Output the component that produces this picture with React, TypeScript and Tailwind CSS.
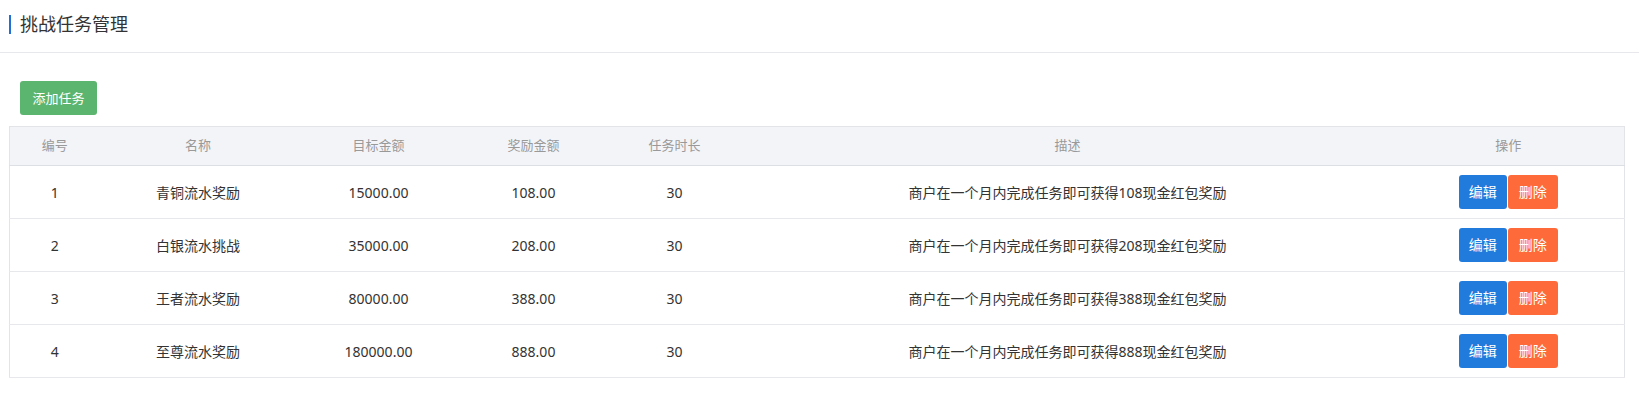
import React from "react"

const tasks = [
    { id: 1, name: "青铜流水奖励", target: "15000.00", reward: "108.00", days: 30, desc: "商户在一个月内完成任务即可获得108现金红包奖励" },
    { id: 2, name: "白银流水挑战", target: "35000.00", reward: "208.00", days: 30, desc: "商户在一个月内完成任务即可获得208现金红包奖励" },
    { id: 3, name: "王者流水奖励", target: "80000.00", reward: "388.00", days: 30, desc: "商户在一个月内完成任务即可获得388现金红包奖励" },
    { id: 4, name: "至尊流水奖励", target: "180000.00", reward: "888.00", days: 30, desc: "商户在一个月内完成任务即可获得888现金红包奖励" },
]

const columns = [
    { title: "编号", width: "w-[90px]" },
    { title: "名称", width: "w-[197px]" },
    { title: "目标金额", width: "w-[164px]" },
    { title: "奖励金额", width: "w-[146px]" },
    { title: "任务时长", width: "w-[136px]" },
    { title: "描述", width: "w-[650px]" },
    { title: "操作", width: "w-[232px]" },
]

export default function App() {
    return (
        <div
            className="w-[1639px] h-[400px] bg-white text-[#333] overflow-hidden"
            style={{ fontFamily: '"Noto Sans", "Noto Sans CJK SC", sans-serif' }}
        >
            {/* 页面标题 */}
            <div className="h-[53px] border-b border-[#e6e8ec] flex items-center pl-[9px] pb-[4px]">
                <span className="w-[2px] h-[19px] bg-[#1f6fd6]" />
                <h1 className="ml-[9px] text-[18px] leading-none text-[#333]">挑战任务管理</h1>
            </div>

            <div className="pl-[9px] pr-[15px]">
                <div className="pt-[28px] pl-[11px]">
                    <button className="h-[34px] w-[77px] rounded-[3px] bg-[#5cb56f] text-white text-[13px] leading-none">
                        添加任务
                    </button>
                </div>

                <table className="mt-[11px] w-[1615px] table-fixed border-collapse border border-[#e2e4e8] text-[14px]">
                    <thead className="bg-[#f3f4f8]">
                        <tr className="h-[39px] border-b border-[#dcdfe4]">
                            {columns.map((col) => (
                                <th key={col.title} className={`${col.width} font-normal text-[13px] text-[#999] text-center`}>
                                    {col.title}
                                </th>
                            ))}
                        </tr>
                    </thead>
                    <tbody>
                        {tasks.map((task) => (
                            <tr key={task.id} className="h-[53px] border-b border-[#e6e8ec] text-center">
                                <td>{task.id}</td>
                                <td>{task.name}</td>
                                <td>{task.target}</td>
                                <td>{task.reward}</td>
                                <td>{task.days}</td>
                                <td>{task.desc}</td>
                                <td>
                                    <div className="flex justify-center gap-[1px]">
                                        <button className="h-[34px] w-[48px] rounded-[3px] bg-[#207bdc] text-white text-[14px] leading-none">
                                            编辑
                                        </button>
                                        <button className="h-[34px] w-[50px] rounded-[3px] bg-[#ff6a3b] text-white text-[14px] leading-none">
                                            删除
                                        </button>
                                    </div>
                                </td>
                            </tr>
                        ))}
                    </tbody>
                </table>
            </div>
        </div>
    )
}
